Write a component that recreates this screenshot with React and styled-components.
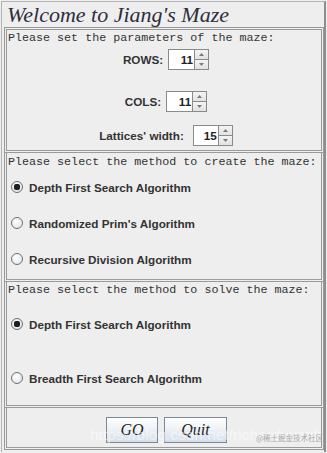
import React from "react";
import styled, { createGlobalStyle } from "styled-components";

const GlobalStyle = createGlobalStyle`
  html, body {
    margin: 0;
    padding: 0;
    background: #eeeeee;
    width: 327px;
    height: 453px;
    overflow: hidden;
  }
  * {
    box-sizing: border-box;
  }
`;

//styles
const Frame = styled.div`
  position: relative;
  margin: 1px 0 0 1px;
  width: 325px;
  height: 451px;
  border-top: 1px solid #b4b4b4;
  border-left: 1px solid #b4b4b4;
  border-right: 2px solid #8e8e8e;
  padding-left: 2px;
  background: #eeeeee;
  display: flex;
  flex-direction: column;
  overflow: hidden;
`;

const Title = styled.div`
  height: 25px;
  padding-left: 3px;
  font-family: "Liberation Serif", serif;
  font-style: italic;
  font-size: 22px;
  line-height: 25px;
  color: #2e2e3c;
  white-space: nowrap;
`;

const Panel = styled.div`
  height: ${({ $h }) => $h}px;
  border: 3px double #9a9a9a;
  display: flex;
  flex-direction: column;
  & + & {
    border-top: none;
  }
`;

const Caption = styled.div`
  margin-top: ${({ $mt }) => $mt}px;
  padding-left: 1px;
  height: 14px;
  font-family: "Liberation Mono", monospace;
  font-size: 11.7px;
  line-height: 14px;
  color: #333333;
  white-space: nowrap;
`;

const FieldRow = styled.div`
  margin-top: ${({ $mt }) => $mt}px;
  display: flex;
  align-items: center;
  justify-content: center;
  gap: ${({ $gap }) => $gap || 5}px;
  height: 21px;
  padding-left: 4px;
`;

const Label = styled.span`
  font-family: "Liberation Sans", Arial, sans-serif;
  font-weight: bold;
  font-size: 11.7px;
  color: #333333;
  white-space: nowrap;
`;

const Spinner = styled.div`
  display: flex;
  height: 21px;
`;

const SpinField = styled.div`
  width: ${({ $w }) => $w || 26}px;
  height: 21px;
  background: #ffffff;
  border: 1px solid #8a8a8a;
  border-right: none;
  text-align: right;
  padding-right: 1px;
  font-family: "Liberation Sans", Arial, sans-serif;
  font-weight: bold;
  font-size: 11.7px;
  line-height: 19px;
  color: #222222;
`;

const SpinButtons = styled.div`
  width: 15px;
  display: flex;
  flex-direction: column;
  border: 1px solid #8a8a8a;
`;

const SpinBtn = styled.div`
  flex: 1;
  display: flex;
  align-items: center;
  justify-content: center;
  background: linear-gradient(#f4f4f4, #e2e2e2);
  & + & {
    border-top: 1px solid #8a8a8a;
  }
`;

const RadioRow = styled.div`
  height: ${({ $h }) => $h}px;
  display: flex;
  align-items: center;
  gap: 6px;
  padding-left: 4px;
`;

const RadioDot = styled.span`
  width: 12px;
  height: 12px;
  border-radius: 50%;
  border: 1px solid #6f6f6f;
  background: radial-gradient(circle at 40% 35%, #ffffff 0%, #e6e9ee 70%, #c9ced6 100%);
  display: flex;
  align-items: center;
  justify-content: center;
  &::after {
    content: "";
    display: ${({ $checked }) => ($checked ? "block" : "none")};
    width: 6px;
    height: 6px;
    border-radius: 2px;
    background: #1e1e1e;
  }
`;

const ButtonBar = styled.div`
  flex: 1;
  display: flex;
  justify-content: center;
  gap: 6px;
  padding-top: 9px;
  padding-left: 5px;
`;

const Button = styled.button`
  width: ${({ $w }) => $w}px;
  height: 26px;
  padding: 0;
  border: 1px solid #7a8899;
  background: linear-gradient(#ffffff 0%, #eef2f7 45%, #d5dde8 100%);
  font-family: "Liberation Serif", serif;
  font-style: italic;
  font-size: 16px;
  color: #1e1e1e;
  cursor: pointer;
`;

// watermark stamped over the screenshot
const Watermark = styled.div`
  position: absolute;
  left: 88px;
  top: 424px;
  font-family: "Liberation Sans", Arial, sans-serif;
  font-size: 15.5px;
  color: rgba(255, 255, 255, 0.55);
  white-space: nowrap;
  pointer-events: none;
`;

const Badge = styled.div`
  position: absolute;
  left: 254px;
  top: 431px;
  font-family: "Noto Sans CJK SC", sans-serif;
  font-size: 7.5px;
  line-height: 9px;
  color: #a8a8a8;
  white-space: nowrap;
  pointer-events: none;
`;

const Arrow = ({ up }) => (
  <svg width="5" height="3" viewBox="0 0 5 3">
    <path d={up ? "M0 3 L2.5 0 L5 3 Z" : "M0 0 L2.5 3 L5 0 Z"} fill="#7a7a7a" />
  </svg>
);

const NumberSpinner = ({ value, w }) => (
  <Spinner>
    <SpinField $w={w}>{value}</SpinField>
    <SpinButtons>
      <SpinBtn>
        <Arrow up />
      </SpinBtn>
      <SpinBtn>
        <Arrow />
      </SpinBtn>
    </SpinButtons>
  </Spinner>
);

const Radio = ({ h, checked, children }) => (
  <RadioRow $h={h}>
    <RadioDot $checked={checked} />
    <Label>{children}</Label>
  </RadioRow>
);

export default function App() {
  return (
    <>
      <GlobalStyle />
      <Frame>
        <Title>Welcome to Jiang's Maze</Title>

        <Panel $h={126}>
          <Caption $mt={1}>Please set the parameters of the maze:</Caption>
          <FieldRow $mt={4}>
            <Label>ROWS:</Label>
            <NumberSpinner value={11} />
          </FieldRow>
          <FieldRow $mt={21}>
            <Label>COLS:</Label>
            <NumberSpinner value={11} />
          </FieldRow>
          <FieldRow $mt={13} $gap={9}>
            <Label>Lattices' width:</Label>
            <NumberSpinner value={15} w={25} />
          </FieldRow>
        </Panel>

        <Panel $h={129}>
          <Caption $mt={2}>Please select the method to create the maze:</Caption>
          <Radio h={36} checked>
            Depth First Search Algorithm
          </Radio>
          <Radio h={36}>Randomized Prim's Algorithm</Radio>
          <Radio h={36}>Recursive Division Algorithm</Radio>
        </Panel>

        <Panel $h={126}>
          <Caption $mt={1}>Please select the method to solve the maze:</Caption>
          <Radio h={54} checked>
            Depth First Search Algorithm
          </Radio>
          <Radio h={54}>Breadth First Search Algorithm</Radio>
        </Panel>

        <Panel $h={42}>
          <ButtonBar>
            <Button $w={52}>GO</Button>
            <Button $w={63}>Quit</Button>
          </ButtonBar>
        </Panel>

        <Watermark>https://blog.csdn.net/richardyuanli</Watermark>
        <Badge>@稀土掘金技术社区</Badge>
      </Frame>
    </>
  );
}
